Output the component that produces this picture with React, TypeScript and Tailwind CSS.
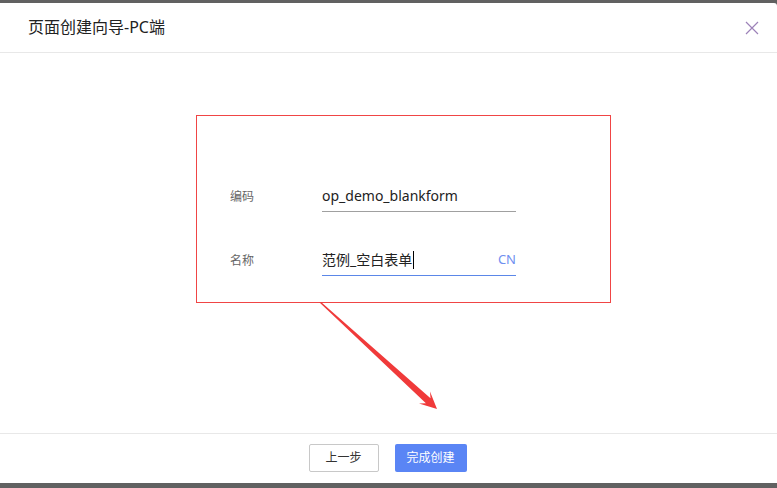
const font = { fontFamily: '"Noto Sans", "Noto Sans CJK SC", sans-serif' };

function CloseIcon() {
	return (
		<svg width="14" height="14" viewBox="0 0 14 14" fill="none">
			<path d="M1 1L13 13M13 1L1 13" stroke="#9c82b8" strokeWidth="1.2" />
		</svg>
	);
}

function Arrow() {
	return (
		<svg className="pointer-events-none absolute left-0 top-0" width="777" height="488" viewBox="0 0 777 488">
			<polygon
				points="319,302 321,302 430.5,398.2 430,391.5 437,409 419,403.5 425.9,403.3"
				fill="#f03a3a"
			/>
		</svg>
	);
}

function Field({ label, children, focused }: { label: string; children: React.ReactNode; focused?: boolean }) {
	return (
		<div className="flex items-center">
			<div className="w-[125px] pl-[33px] pb-[1px] text-xs text-[#666]">{label}</div>
			<div
				className={
					"flex h-[29px] w-[194px] items-center border-b pb-[3px] " +
					(focused ? "border-[#5b87e8]" : "border-[#a0a0a0]")
				}
			>
				{children}
			</div>
		</div>
	);
}

export default function App() {
	return (
		<div className="relative h-[488px] w-[777px] bg-[#616161] pt-[3px] pb-[5px]" style={font}>
			<div className="flex h-[480px] flex-col rounded-tr-[3px] bg-white">
				<div className="flex h-[50px] items-center justify-between border-b border-[#e8e8e8] pl-7 pr-[18px]">
					<h1 className="pb-[1px] text-base text-[#222]">页面创建向导-PC端</h1>
					<CloseIcon />
				</div>

				<div className="h-[380px] pt-[62px] pl-[196px]">
					<div className="w-[415px] h-[188px] border border-[#f04545] pt-[67px]">
						<Field label="编码">
							<span className="text-sm text-[#222]">op_demo_blankform</span>
						</Field>
						<div className="h-[35px]" />
						<Field label="名称" focused>
							<span className="text-sm text-[#222]">范例_空白表单</span>
							<span className="ml-[1px] h-[18px] w-px bg-black" />
							<span className="ml-auto text-[13px] text-[#6f8ff0]">CN</span>
						</Field>
					</div>
				</div>

				<div className="flex h-[50px] justify-center gap-4 border-t border-[#e8e8e8] pt-[10px] pr-[2px]">
					<button className="h-[28px] w-[70px] rounded-[2px] border border-[#c8c8c8] bg-white text-xs text-[#333]">
						上一步
					</button>
					<button className="h-[28px] w-[72px] rounded-[2px] bg-[#5a85f5] text-xs text-white">完成创建</button>
				</div>
			</div>
			<Arrow />
		</div>
	);
}
